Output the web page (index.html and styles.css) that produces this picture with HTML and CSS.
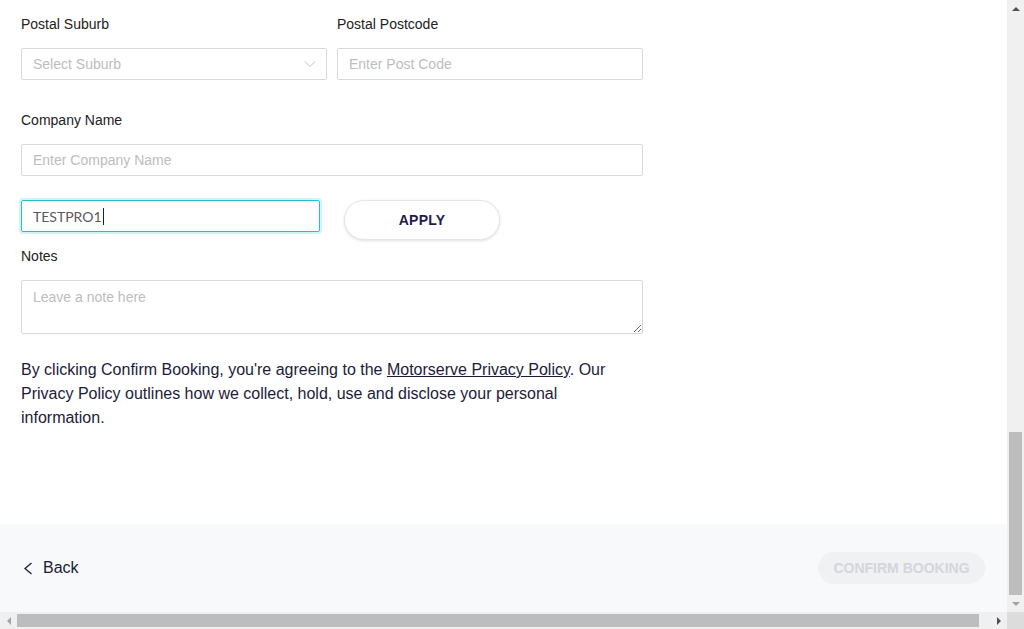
FILE: index.html
```html
<!DOCTYPE html>
<html>
<head>
<meta charset="utf-8">
<link rel="stylesheet" href="styles.css">
</head>
<body>
<div class="window">
  <div class="viewport">
    <div class="content">
      <div class="row">
        <div class="field half">
          <label class="label">Postal Suburb</label>
          <div class="select">
            <span class="placeholder">Select Suburb</span>
            <svg class="chev" width="12" height="8" viewBox="0 0 12 8"><path d="M1 1.5 L6 6.5 L11 1.5" fill="none" stroke="#c4c4c4" stroke-width="1"/></svg>
          </div>
        </div>
        <div class="field half">
          <label class="label">Postal Postcode</label>
          <input class="input" placeholder="Enter Post Code">
        </div>
      </div>
      <div class="field company">
        <label class="label">Company Name</label>
        <input class="input" placeholder="Enter Company Name">
      </div>
      <div class="promo">
        <div class="promo-input"><span class="promo-text">TESTPRO1</span><span class="caret"></span></div>
        <button class="apply">APPLY</button>
      </div>
      <div class="field notes">
        <label class="label">Notes</label>
        <textarea class="textarea" placeholder="Leave a note here"></textarea>
      </div>
      <p class="legal">By clicking Confirm Booking, you're agreeing to the <a class="link">Motorserve Privacy Policy</a>. Our Privacy Policy outlines how we collect, hold, use and disclose your personal information.</p>
    </div>
    <div class="footer">
      <div class="back">
        <svg width="10" height="13" viewBox="0 0 10 13"><path d="M8.5 1 L2 6.5 L8.5 12" fill="none" stroke="#1d1b3a" stroke-width="1.3"/></svg>
        <span>Back</span>
      </div>
      <button class="confirm">CONFIRM BOOKING</button>
    </div>
  </div>
  <div class="vscroll">
    <div class="arrow"><span class="tri-up"></span></div>
    <div class="vtrack"><div class="vthumb"></div></div>
    <div class="arrow"><span class="tri-down"></span></div>
  </div>
  <div class="hscroll">
    <div class="arrow"><span class="tri-left"></span></div>
    <div class="htrack"><div class="hthumb"></div></div>
    <div class="arrow"><span class="tri-right"></span></div>
  </div>
  <div class="corner"></div>
</div>
</body>
</html>
```
FILE: styles.css
```css
html, body { margin: 0; padding: 0; }
body { font-family: "Liberation Sans", Arial, sans-serif; overflow: hidden; background: #fff; }
.window {
  width: 1024px; height: 629px;
  display: grid;
  grid-template-columns: 1007px 17px;
  grid-template-rows: 612px 17px;
}
.viewport { display: flex; flex-direction: column; background: #fff; overflow: hidden; }
.content { padding: 14px 0 0 21px; width: 622px; flex: 1; }
.row { display: flex; gap: 10px; }
.field { display: flex; flex-direction: column; }
.half { flex: 1; }
.label { font-size: 14px; line-height: 20px; color: #222; margin-bottom: 14px; }
.select, .input, .textarea {
  box-sizing: border-box; height: 32px; border: 1px solid #d9d9d9; border-radius: 2px;
  font-family: "Liberation Sans", Arial, sans-serif; font-size: 14px; padding: 0 11px; color: #333; background: #fff;
}
.input::placeholder, .textarea::placeholder { color: #bdbdbd; }
.select { display: flex; align-items: center; justify-content: space-between; padding-right: 10px; }
.placeholder { color: #bdbdbd; }
.company { margin-top: 30px; }
.promo { display: flex; align-items: flex-start; margin-top: 24px; gap: 24px; height: 40px; }
.promo-input {
  box-sizing: border-box; width: 299px; height: 32px; border: 1px solid #1fc0da; border-radius: 2px;
  box-shadow: 0 0 0 2px #d6f3f8; display: flex; align-items: center; padding-left: 11px;
  font-family: Lato, sans-serif; font-size: 14px; color: #5a5a5a;
}
.caret { display: inline-block; width: 1px; height: 17px; background: #222; margin-left: 1px; }
.apply {
  width: 156px; height: 40px; border-radius: 20px; border: 1px solid #e6e6e6; background: #fff;
  box-shadow: 0 1px 3px rgba(0,0,0,0.12); font-family: "Liberation Sans", Arial, sans-serif;
  font-weight: bold; font-size: 14px; color: #1f1c4a; letter-spacing: 0.2px; padding: 0; margin-top: 0;
}
.notes { margin-top: 6px; }
.textarea { height: 54px; padding: 8px 11px; resize: vertical; display: block; width: 100%; }
.legal { margin: 24px 0 0; font-size: 16px; line-height: 24px; color: #1d1b3a; }
.link { color: #1d1b3a; text-decoration: underline; }
.footer {
  height: 88px; background: #f8f9fb; display: flex; align-items: center; justify-content: space-between;
  padding: 0 22px 0 23px; box-sizing: border-box; flex-shrink: 0;
}
.back { display: flex; align-items: center; gap: 10px; font-size: 16px; color: #1d1b3a; }
.confirm {
  width: 167px; height: 32px; border-radius: 16px; border: none; background: #f0f1f3;
  font-family: "Liberation Sans", Arial, sans-serif; font-weight: bold; font-size: 14px; color: #d3d6db; padding: 0;
}
.vscroll { background: #f0f0f0; display: flex; flex-direction: column; }
.hscroll { background: #f0f0f0; display: flex; }
.corner { background: #dcdcdc; }
.arrow { width: 17px; height: 17px; display: flex; align-items: center; justify-content: center; flex-shrink: 0; }
.vtrack { flex: 1; }
.vthumb { margin: 415px 2px 0; height: 163px; background: #bdbdbd; }
.htrack { flex: 1; }
.hthumb { margin: 2px 0; width: 962px; height: 13px; background: #bdbdbd; }
.tri-up { width: 0; height: 0; border-left: 4px solid transparent; border-right: 4px solid transparent; border-bottom: 4px solid #505050; }
.tri-down { width: 0; height: 0; border-left: 4px solid transparent; border-right: 4px solid transparent; border-top: 4px solid #a3a3a3; }
.tri-left { width: 0; height: 0; border-top: 4px solid transparent; border-bottom: 4px solid transparent; border-right: 4px solid #a3a3a3; }
.tri-right { width: 0; height: 0; border-top: 4px solid transparent; border-bottom: 4px solid transparent; border-left: 4px solid #505050; }
```
